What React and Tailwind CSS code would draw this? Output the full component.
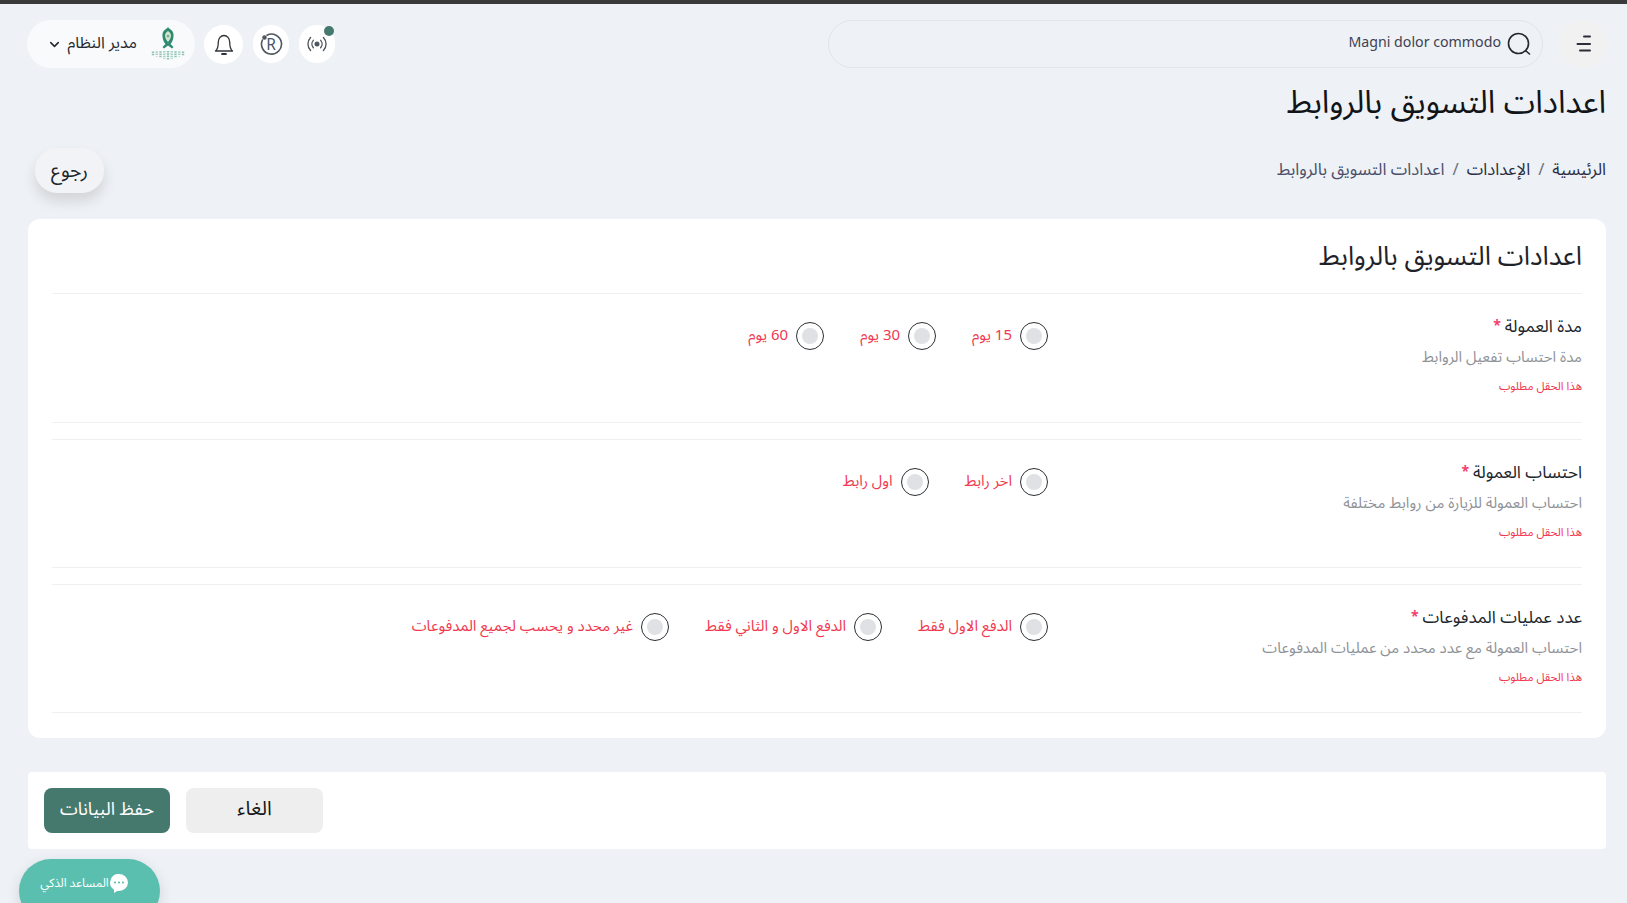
import React from "react";
import { ChevronDown } from "lucide-react";

const font = "font-['Noto_Sans','Noto_Sans_Arabic','DejaVu_Sans',sans-serif]";

function Logo() {
  const fan = [];
  for (let i = 0; i < 9; i++) {
    const x = 2 + i * 3.75;
    const d = Math.abs(i - 4);
    fan.push(<path key={i} d={`M${x} ${24 + d * 0.1}V${33 - d * 1.2}`} stroke={i % 2 ? "#a6d0c0" : "#8fc4b0"} strokeWidth="2.400" strokeDasharray="1.500 .8" />);
  }
  return (
    <svg width="34" height="34" viewBox="0 0 34 34">
      <path d="M17 0c1 2 5 3 5.500 7 .4 4-1 8-3 10l3 3-1.500 1.500L17 18.500 13 21.500 11.500 20l3-3c-2-2-3.400-6-3-10C12 3 16 2 17 0z" fill="#2e8b6f" />
      <path d="M17 4c1 1 3 2 3 4.500S18.500 13 17 15c-1.500-2-3-4-3-6.500S16 5 17 4z" fill="#d9e6cf" />
      <circle cx="17" cy="9" r="1.500" fill="#7fae92" />
      {fan}
    </svg>
  );
}

function Radio({ label }) {
  return (
    <label className="flex items-center gap-2">
      <span className="flex h-7 w-7 shrink-0 items-center justify-center rounded-full border border-[#2b2f33] bg-white">
        <span className="h-4 w-4 rounded-full bg-[#e0e1e5]" />
      </span>
      <span className="-mt-1 text-[15px] leading-none text-[#f1384f]">{label}</span>
    </label>
  );
}

function Row({ title, desc, options, last }) {
  return (
    <div className={`flex h-[129px] border-b border-[#eff0f1] ${last ? "" : "mb-4 [&+div]:border-t"}`}>
      <div className="w-[534px] shrink-0 pt-5">
        <div className="flex h-6 items-center gap-1 text-[17px] leading-6 text-[#20252b]">
          <span>{title}</span>
          <span className="-mt-0.5 text-sm leading-none font-bold text-[#f1416c]">*</span>
        </div>
        <p className="mt-1.5 h-6 text-[15px] leading-6 text-[#8f9297]">{desc}</p>
        <p className="mt-[10px] text-[11.5px] leading-4 text-[#f1384f]">هذا الحقل مطلوب</p>
      </div>
      <div className="flex items-start gap-9 pt-7">
        {options.map((o) => (
          <Radio key={o} label={o} />
        ))}
      </div>
    </div>
  );
}

export default function App() {
  return (
    <div dir="rtl" className={`${font} relative h-[903px] overflow-hidden border-t-4 border-[#3a3a3a] bg-[#eef1f5]`}>
      <header className="mt-4 flex h-[48px] items-center pl-[27px] pr-5">
        <button className="flex h-12 w-12 items-center justify-center rounded-full bg-[#f1f1f2]">
          <svg width="16" height="18" viewBox="0 0 16 18" stroke="#2a2f36" strokeWidth="2" strokeLinecap="round">
            <path d="M9 1.500H15M2.500 9H15M5 15.500H15" />
          </svg>
        </button>
        <div className="mr-4 flex h-12 w-[715px] items-center gap-1.5 rounded-full border border-[#e1e4e9] pr-[11px]">
          <svg width="24" height="24" viewBox="0 0 24 24" fill="none" stroke="#24282e" strokeWidth="1.6" strokeLinecap="round">
            <circle cx="11.500" cy="11.500" r="10" />
            <path d="M19 19l3.500 3" />
          </svg>
          <span className="-mt-1 text-[14.2px] text-[#3f4254]">Magni dolor commodo</span>
        </div>
        <div className="mr-auto flex items-center">
          <div className="relative ml-[10px] flex h-[38px] w-[36px] items-center justify-center rounded-full bg-white">
            <span className="absolute left-[25px] top-[1px] h-2.5 w-2.5 rounded-full bg-[#45796d]" />
            <svg width="22" height="22" viewBox="0 0 24 24" fill="none" stroke="#50565e" strokeWidth="1.500" strokeLinecap="round">
              <circle cx="12" cy="12" r="2" fill="#50565e" />
              <path d="M8 8a6 6 0 0 0 0 8M16 8a6 6 0 0 1 0 8M5 5a10 10 0 0 0 0 14M19 5a10 10 0 0 1 0 14" />
            </svg>
          </div>
          <div className="ml-[10px] flex h-[38px] w-[36px] items-center justify-center rounded-full bg-white">
            <svg width="24" height="24" viewBox="0 0 24 24" fill="none" stroke="#50565e" strokeWidth="1.600" strokeLinecap="round">
              <path d="M8 3.200A10 10 0 1 1 3.400 8" />
              <circle cx="5.500" cy="5.500" r="1.500" fill="#50565e" />
              <text x="12" y="17.500" textAnchor="middle" fontSize="15.500" fontFamily="Noto Sans, sans-serif" fill="#4a5568" stroke="none">R</text>
            </svg>
          </div>
          <div className="ml-[9px] flex h-[39px] w-[39px] items-center justify-center rounded-full bg-white">
            <svg width="24" height="24" viewBox="0 0 24 24" fill="none" stroke="#30343a" strokeWidth="1.300" strokeLinecap="round" strokeLinejoin="round">
              <path d="M3.500 19c2-1.500 2.800-4 2.800-9a5.700 6.500 0 0 1 11.400 0c0 5 .8 7.500 2.800 9z" />
              <path d="M10 22h4" strokeWidth="1.800" />
            </svg>
          </div>
          <div className="flex h-12 w-[168px] items-center rounded-full bg-[#f8fafc] pl-5 pr-[10px]">
            <Logo />
            <span className="mr-3.5 -mt-1 text-base text-[#25292f]">مدير النظام</span>
            <ChevronDown size={15} strokeWidth={2.500} color="#25292f" className="mr-auto" />
          </div>
        </div>
      </header>

      <main className="pl-[28px] pr-[21px]">
        <h1 className="mt-[11px] h-[44px] text-[31.8px] leading-[44px] text-[#111418]">اعدادات التسويق بالروابط</h1>
        <div className="mt-[24px] flex h-[46px] items-center justify-between pl-[7px]">
          <nav className="-mt-0.5 flex items-center gap-2 text-[16.7px] text-[#2a2e45]">
            <span>الرئيسية</span>
            <span className="text-[#6e7180]">/</span>
            <span>الإعدادات</span>
            <span className="text-[#6e7180]">/</span>
            <span className="text-[#4a4e69]">اعدادات التسويق بالروابط</span>
          </nav>
          <button className="flex h-[45px] w-[69px] items-center justify-center rounded-[22px] bg-[#f1f3f6] text-[19.5px] text-[#20252b] shadow-[0_8px_14px_rgba(0,0,0,0.12)]">رجوع</button>
        </div>

        <section className="mt-[26px] h-[519px] rounded-xl bg-white px-6">
          <h2 className="flex h-[75px] items-center border-b border-[#eff0f1] text-[26.2px] text-[#1f2329]">اعدادات التسويق بالروابط</h2>
          <Row title="مدة العمولة" desc="مدة احتساب تفعيل الروابط" options={["15 يوم", "30 يوم", "60 يوم"]} />
          <Row title="احتساب العمولة" desc="احتساب العمولة للزيارة من روابط مختلفة" options={["اخر رابط", "اول رابط"]} />
          <Row title="عدد عمليات المدفوعات" desc="احتساب العمولة مع عدد محدد من عمليات المدفوعات" options={["الدفع الاول فقط", "الدفع الاول و الثاني فقط", "غير محدد و يحسب لجميع المدفوعات"]} last />
        </section>

        <footer className="mt-[34px] flex h-[77px] items-center justify-end gap-4 rounded-sm bg-white pl-4">
          <button className="h-[45px] w-[137px] rounded-lg bg-[#eeeeee] pb-1.5 text-xl text-[#15181c]">الغاء</button>
          <button className="h-[45px] w-[126px] rounded-lg bg-[#45796d] pb-1.5 text-lg text-white">حفظ البيانات</button>
        </footer>

        <div className="absolute bottom-[-20px] left-[19px] flex h-[64px] w-[141px] items-center justify-center rounded-[32px] bg-[#5abfae] pb-4 pr-[10px] text-xs text-white shadow-[0_4px_14px_rgba(0,0,0,0.12)]">
          <svg width="20" height="20" viewBox="0 0 20 20">
            <path d="M10 1a9 8.500 0 0 1 0 17c-.6 0-1.200 0-1.800-.1L5 20v-3.400A8.500 8.500 0 0 1 10 1z" fill="#fff" />
            <circle cx="6" cy="9.500" r="1.100" fill="#5abfae" /><circle cx="10" cy="9.500" r="1.100" fill="#5abfae" /><circle cx="14" cy="9.500" r="1.100" fill="#5abfae" />
          </svg>
          <span>المساعد الذكي</span>
        </div>
      </main>
    </div>
  );
}
